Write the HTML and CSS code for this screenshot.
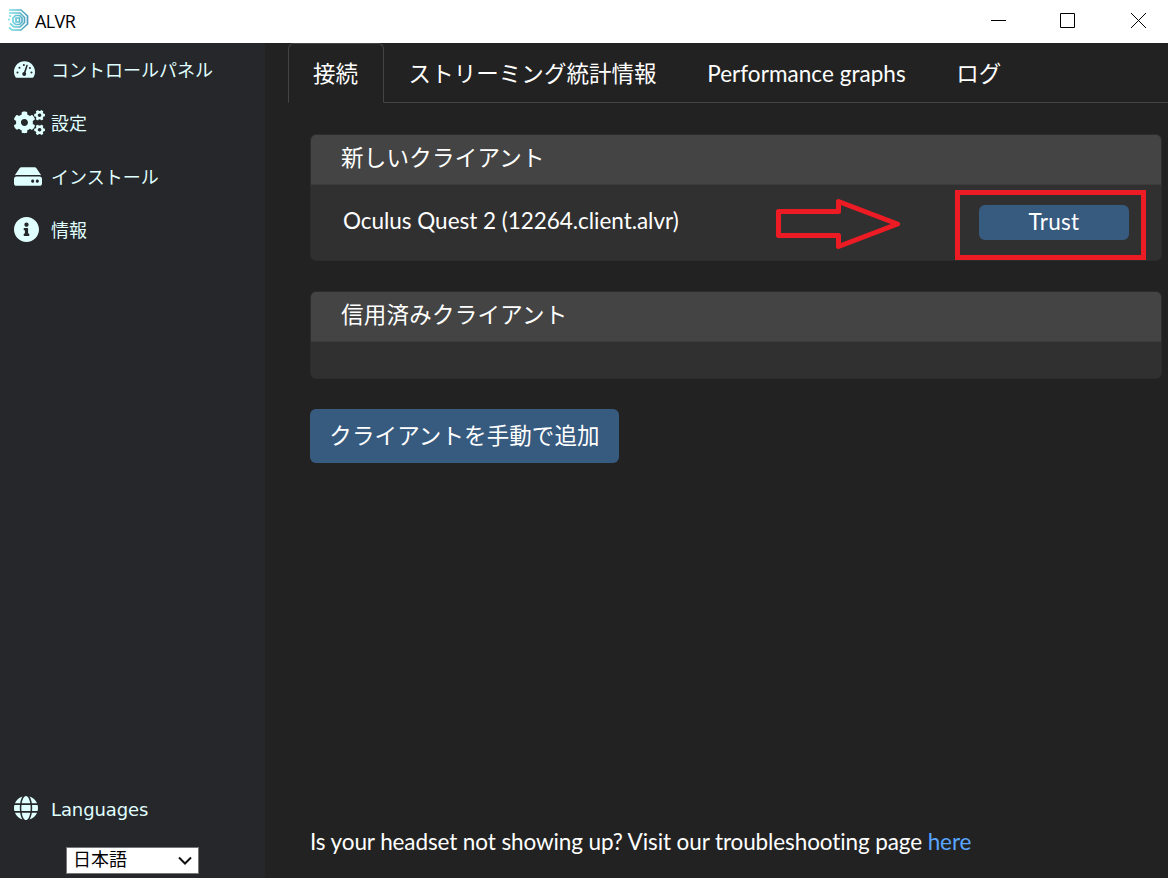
FILE: index.html
```html
<!DOCTYPE html>
<html lang="ja">
<head>
    <meta charset="UTF-8">
    <meta name="viewport" content="width=device-width, initial-scale=1.0">
    <title>ALVR</title>
    <link rel="stylesheet" href="styles.css">
</head>
<body>
    <header class="titlebar">
        <svg class="logo" viewBox="0 0 22 24" fill="none" stroke-width="1.7">
            <defs>
                <linearGradient id="logo-color" gradientUnits="userSpaceOnUse" x1="0" y1="0" x2="20" y2="0">
                    <stop offset="0" stop-color="#7fe3e6"/>
                    <stop offset="1" stop-color="#4a9dbb"/>
                </linearGradient>
            </defs>
            <g stroke="url(#logo-color)">
                <path d="M1 2h12l6.500 6v8l-6.500 6H4l-3-2.500"/>
                <path d="M1 5h11l4.500 4.500v5L12 19H6l-4-3.500"/>
                <path d="M1 8h2M0 11.500h2M7.500 7.500h4l2.500 2.500v4l-2.500 2.500h-4L5 14v-4z"/>
                <path d="M8 10h3.500v4H8z"/>
            </g>
        </svg>
        <span class="title">ALVR</span>
        <svg class="window-buttons" viewBox="0 0 156 16" fill="none" stroke="#000">
            <path d="M0 8.500h15M69.500 1.500h14v14h-14z"/>
            <path d="M140 1l15 15M155 1l-15 15"/>
        </svg>
    </header>
    <div class="app">
        <nav class="sidebar">
            <a class="nav-item">
                <svg class="icon-dashboard" viewBox="0 32 576 448">
                    <path fill="currentColor" d="M288 32C128.940 32 0 160.940 0 320c0 52.800 14.250 102.260 39.060 144.800 5.610 9.620 16.300 15.200 27.440 15.200h443c11.140 0 21.830-5.580 27.440-15.200C561.750 422.260 576 372.800 576 320c0-159.060-128.940-288-288-288z"/>
                    <g class="cutout">
                        <circle cx="96" cy="336" r="28"/>
                        <circle cx="150" cy="208" r="28"/>
                        <circle cx="270" cy="134" r="28"/>
                        <circle cx="436" cy="216" r="28"/>
                        <circle cx="480" cy="336" r="28"/>
                        <circle cx="280" cy="380" r="54"/>
                        <path d="M258 375l82-240c10-22 46-10 38 12l-76 238z"/>
                    </g>
                </svg>
                <span>コントロールパネル</span>
            </a>
            <a class="nav-item">
                <svg class="icon-cogs" viewBox="0 0 640 512" fill="currentColor">
                    <path id="small-cog" d="M512.100 191l-8.200 14.300c-3 5.300-9.400 7.500-15.100 5.400-11.800-4.400-22.600-10.700-32.100-18.600-4.600-3.800-5.800-10.500-2.800-15.700l8.200-14.300c-6.900-8-12.300-17.300-15.900-27.400h-16.500c-6 0-11.200-4.300-12.200-10.300-2-12-2.100-24.600 0-37.100 1-6 6.200-10.400 12.200-10.400h16.500c3.600-10.100 9-19.400 15.900-27.400l-8.200-14.300c-3-5.200-1.900-11.900 2.800-15.700 9.500-7.900 20.400-14.200 32.100-18.600 5.700-2.100 12.100.1 15.100 5.400l8.200 14.300c10.500-1.900 21.200-1.900 31.700 0L552 6.300c3-5.300 9.400-7.500 15.100-5.400 11.800 4.400 22.600 10.700 32.100 18.600 4.600 3.800 5.800 10.500 2.800 15.700l-8.200 14.300c6.900 8 12.300 17.300 15.900 27.400h16.500c6 0 11.200 4.300 12.200 10.300 2 12 2.100 24.600 0 37.100-1 6-6.200 10.400-12.200 10.400h-16.500c-3.600 10.100-9 19.400-15.900 27.400l8.200 14.300c3 5.200 1.900 11.900-2.800 15.700-9.500 7.900-20.400 14.200-32.100 18.600-5.700 2.100-12.100-.1-15.100-5.400l-8.200-14.300c-10.400 1.900-21.200 1.900-31.700 0zm-10.500-58.800c38.500 29.600 82.400-14.300 52.800-52.800-38.500-29.700-82.400 14.300-52.800 52.800z"/>
                    <use href="#small-cog" y="301"/>
                    <path d="M386.300 286.100l33.700 16.800c10.100 5.800 14.500 18.100 10.500 29.100-8.900 24.200-26.400 46.400-42.600 65.800-7.400 8.900-20.200 11.100-30.300 5.300l-29.100-16.800c-16 13.700-34.600 24.600-54.900 31.700v33.600c0 11.600-8.300 21.600-19.700 23.600-24.600 4.200-50.400 4.400-75.900 0-11.500-2-20-11.900-20-23.600V418c-20.300-7.200-38.900-18-54.900-31.700L74 403c-10 5.800-22.900 3.600-30.300-5.300-16.200-19.400-33.300-41.600-42.200-65.700-4-10.900.4-23.200 10.500-29.100l33.300-16.800c-3.900-20.900-3.900-42.400 0-63.400L12 205.800c-10.100-5.800-14.600-18.100-10.500-29 8.900-24.200 26-46.400 42.200-65.800 7.400-8.900 20.200-11.100 30.300-5.300l29.100 16.800c16-13.700 34.600-24.600 54.900-31.700V57.100c0-11.500 8.200-21.500 19.600-23.500 24.600-4.200 50.500-4.400 76-.1 11.500 2 20 11.900 20 23.600v33.600c20.300 7.200 38.900 18 54.900 31.700l29.100-16.800c10-5.800 22.900-3.600 30.300 5.300 16.200 19.400 33.200 41.600 42.100 65.800 4 10.900.1 23.200-10 29.100l-33.700 16.800c3.900 21 3.900 42.500 0 63.500zm-117.600 21.100c59.200-77-28.700-164.900-105.700-105.700-59.200 77 28.700 164.900 105.700 105.700z"/>
                </svg>
                <span>設定</span>
            </a>
            <a class="nav-item">
                <svg class="icon-drive" viewBox="0 0 576 512" fill="currentColor">
                    <path d="M576 304v96c0 26.510-21.490 48-48 48H48c-26.510 0-48-21.490-48-48v-96c0-26.510 21.490-48 48-48h480c26.510 0 48 21.490 48 48zm-48-80a79.557 79.557 0 0 1 30.777 6.165L462.250 85.374A48.003 48.003 0 0 0 422.311 64H153.689a48 48 0 0 0-39.938 21.374L17.223 230.165A79.557 79.557 0 0 1 48 224h480zm-48 96c-17.673 0-32 14.327-32 32s14.327 32 32 32 32-14.327 32-32-14.327-32-32-32zm-96 0c-17.673 0-32 14.327-32 32s14.327 32 32 32 32-14.327 32-32-14.327-32-32-32z"/>
                </svg>
                <span>インストール</span>
            </a>
            <a class="nav-item">
                <svg class="icon-round icon-info" viewBox="8 8 496 496" fill="currentColor">
                    <path d="M256 8C119.043 8 8 119.083 8 256c0 136.997 111.043 248 248 248s248-111.003 248-248C504 119.083 392.957 8 256 8zm0 110c23.196 0 42 18.804 42 42s-18.804 42-42 42-42-18.804-42-42 18.804-42 42-42zm56 254c0 6.627-5.373 12-12 12h-88c-6.627 0-12-5.373-12-12v-24c0-6.627 5.373-12 12-12h12v-64h-12c-6.627 0-12-5.373-12-12v-24c0-6.627 5.373-12 12-12h64c6.627 0 12 5.373 12 12v100h12c6.627 0 12 5.373 12 12v24z"/>
                </svg>
                <span>情報</span>
            </a>
            <div class="languages">
                <div class="nav-item">
                    <svg class="icon-round" viewBox="0 8 496 496" fill="currentColor">
                        <path d="M336.500 160C322 70.700 287.800 8 248 8s-74 62.700-88.500 152h177zM152 256c0 22.200 1.200 43.500 3.300 64h185.300c2.100-20.500 3.300-41.800 3.300-64s-1.200-43.500-3.300-64H155.300c-2.100 20.500-3.300 41.800-3.300 64zm324.700-96c-28.600-67.900-86.500-120.400-158-141.600 24.400 33.800 41.200 84.700 50 141.600h108zM177.200 18.400C105.800 39.600 47.800 92.100 19.300 160h108c8.700-56.900 25.500-107.800 49.900-141.600zM487.400 192H372.700c2.100 21 3.300 42.500 3.300 64s-1.200 43-3.300 64h114.600c5.500-20.500 8.600-41.800 8.600-64s-3.100-43.500-8.500-64zM120 256c0-21.500 1.200-43 3.300-64H8.600C3.200 212.500 0 233.800 0 256s3.200 43.500 8.600 64h114.600c-2-21-3.200-42.500-3.200-64zm39.500 96c14.500 89.300 48.700 152 88.500 152s74-62.700 88.500-152h-177zm159.300 141.600c71.400-21.200 129.400-73.700 158-141.600h-108c-8.800 56.900-25.600 107.800-50 141.600zM19.300 352c28.600 67.900 86.500 120.400 158 141.600-24.400-33.800-41.200-84.700-50-141.600h-108z"/>
                    </svg>
                    <span>Languages</span>
                </div>
                <div class="select">
                    <span>日本語</span>
                    <svg viewBox="0 0 14 9" fill="none" stroke="#111" stroke-width="2">
                        <path d="M1 1.500l6 6 6-6"/>
                    </svg>
                </div>
            </div>
        </nav>
        <main class="content">
            <div class="tabs">
                <a class="tab active">接続</a>
                <a class="tab">ストリーミング統計情報</a>
                <a class="tab">Performance graphs</a>
                <a class="tab">ログ</a>
            </div>
            <div class="clients">
                <section class="card">
                    <h2 class="card-header">新しいクライアント</h2>
                    <div class="card-body client">
                        <span>Oculus Quest 2 (12264.client.alvr)</span>
                        <button class="btn btn-trust">Trust</button>
                        <svg class="arrow" viewBox="0 0 126 52">
                            <path d="M3.500 13.500h60V3.500L122.500 26 63.500 48.500V37.500h-60z"/>
                        </svg>
                        <div class="highlight"></div>
                    </div>
                </section>
                <section class="card">
                    <h2 class="card-header">信用済みクライアント</h2>
                    <div class="card-body"></div>
                </section>
                <button class="btn btn-add">クライアントを手動で追加</button>
                <p class="help">Is your headset not showing up? Visit our troubleshooting page <a>here</a></p>
            </div>
        </main>
    </div>
</body>
</html>
```
FILE: styles.css
```css
* {
    box-sizing: border-box;
}

body {
    margin: 0;
    height: 878px;
    display: flex;
    flex-direction: column;
    overflow: hidden;
    background: #222;
    color: #fff;
    font-family: Lato, "Noto Sans CJK JP", sans-serif;
    font-size: 22.5px;
}

/* window title bar */
.titlebar {
    height: 43px;
    flex: none;
    display: flex;
    align-items: center;
    padding: 0 21px 3px 8px;
    background: #fff;
    color: #000;
}

.logo {
    width: 22px;
    height: 24px;
}

.title {
    margin: 1px 0 0 5px;
    font: 18px "Open Sans", sans-serif;
    letter-spacing: -0.6px;
}

.window-buttons {
    width: 156px;
    height: 16px;
    margin-left: auto;
}

.app {
    flex: 1;
    display: flex;
}

/* sidebar */
.sidebar {
    width: 265px;
    flex: none;
    display: flex;
    flex-direction: column;
    background: #25272b;
    color: #e0ffff;
    font-family: "DejaVu Sans", "Noto Sans CJK JP", sans-serif;
    font-size: 18px;
}

.nav-item {
    height: 53.5px;
    display: flex;
    align-items: center;
    padding-left: 14px;
}

.nav-item svg {
    flex: none;
}

.nav-item span {
    padding-top: 2px;
    line-height: 24px;
}

.icon-dashboard {
    width: 21px;
    height: 17px;
    margin-right: 16px;
}

.icon-cogs {
    width: 31px;
    height: 25px;
    margin: 0 6px 2px 0;
}

.icon-drive {
    width: 28px;
    height: 25px;
    margin-right: 9px;
}

.icon-round {
    width: 24px;
    height: 24px;
    margin-right: 13px;
}

.icon-info {
    width: 25px;
    height: 25px;
    margin: 0 12px 2px 0;
}

.cutout {
    fill: #25272b;
}

.languages {
    margin-top: auto;
    padding-bottom: 4px;
}

.languages .nav-item span {
    padding-top: 4px;
    letter-spacing: -0.1px;
}

.select {
    width: 133px;
    height: 27px;
    margin: 12px 0 0 66px;
    padding: 0 6px;
    display: flex;
    align-items: center;
    justify-content: space-between;
    border: 1px solid #767676;
    background: #fff;
    color: #000;
    line-height: 23px;
}

.select span {
    padding-bottom: 2px;
}

.select svg {
    width: 14px;
    height: 9px;
}

/* tabs */
.content {
    flex: 1;
    display: flex;
    flex-direction: column;
    padding-left: 23px;
}

.tabs {
    height: 60px;
    display: flex;
    border-bottom: 1px solid #444;
}

.tab {
    height: 60px;
    padding: 0 24.5px 0 24px;
    border: 1px solid transparent;
    letter-spacing: 0.05px;
    line-height: 59px;
    white-space: nowrap;
}

.tab.active {
    border-color: #444 #444 #222;
    border-radius: 6px 6px 0 0;
    background: #222;
}

/* clients */
.clients {
    flex: 1;
    display: flex;
    flex-direction: column;
    align-items: flex-start;
    padding: 31px 6px 19px 22px;
}

.card {
    width: 852px;
    margin-bottom: 30px;
    border: 1px solid #2c2c2c;
    border-radius: 6px;
    background: #303030;
}

.card-header {
    height: 49.5px;
    margin: 0;
    padding-left: 30px;
    border-bottom: 1px solid #3c3c3c;
    border-radius: 5px 5px 0 0;
    background: #444;
    font-size: 22.5px;
    font-weight: 400;
    letter-spacing: 0.25px;
    line-height: 45px;
}

.card-body {
    height: 36px;
}

.client {
    position: relative;
    height: 75.75px;
    display: flex;
    align-items: center;
    justify-content: space-between;
    padding: 0 32px;
    line-height: 34px;
}

.client span {
    padding-bottom: 2px;
    letter-spacing: -0.03px;
}

.btn {
    border: 0;
    border-radius: 6px;
    background: #375a7f;
    color: #fff;
    font: inherit;
}

.btn-trust {
    width: 150px;
    height: 35px;
    padding: 0 0 2px;
    letter-spacing: 0.3px;
    line-height: 33px;
}

.btn-add {
    width: 309px;
    height: 54px;
    padding: 0 0 3px;
    letter-spacing: 0.1px;
}

.help {
    margin: auto 0 0;
    letter-spacing: -0.105px;
    line-height: 34px;
}

.help a {
    color: #59a5ff;
}

/* callouts over the trust button */
.arrow {
    position: absolute;
    left: 464px;
    top: 13.5px;
    width: 126px;
    height: 52px;
    fill: none;
    stroke: #ed1c24;
    stroke-width: 5;
    stroke-linejoin: round;
}

.highlight {
    position: absolute;
    left: 644px;
    top: 5.5px;
    width: 191px;
    height: 70px;
    border: 5px solid #ed1c24;
}
```
